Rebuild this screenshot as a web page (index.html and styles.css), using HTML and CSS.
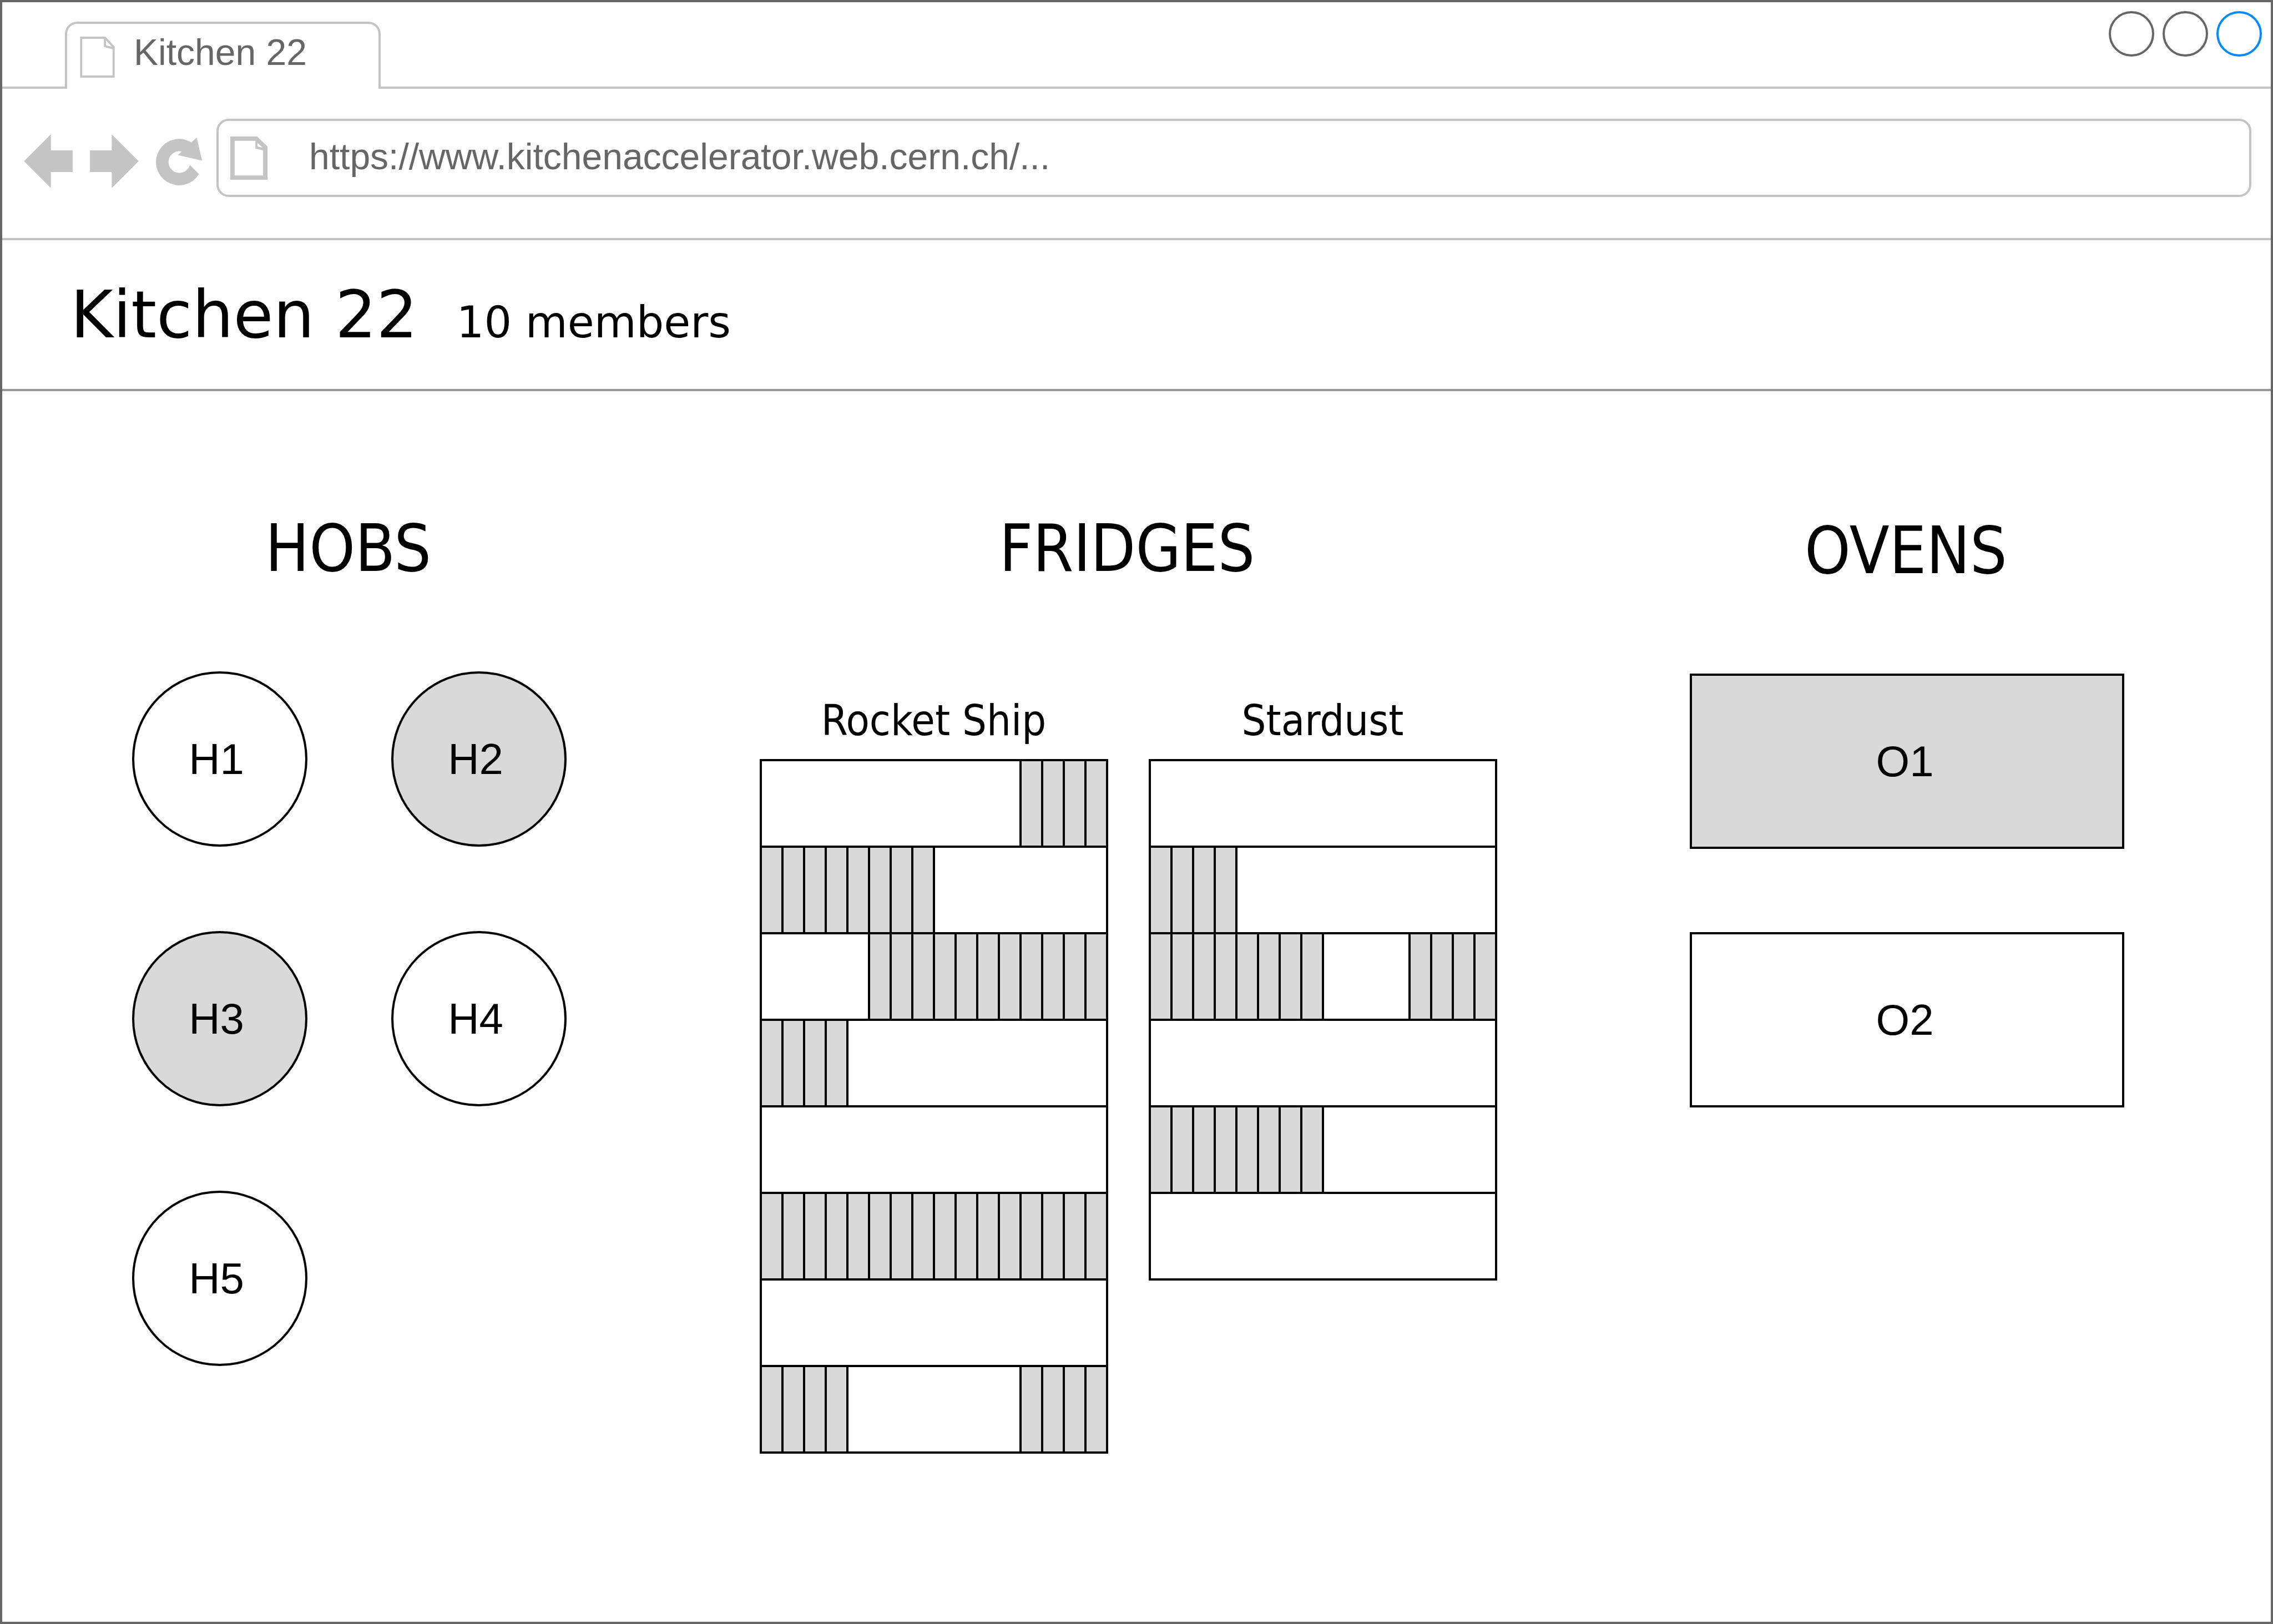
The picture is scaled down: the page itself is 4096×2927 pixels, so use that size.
FILE: index.html
```html
<!DOCTYPE html>
<html lang="en">
<head>
<meta charset="utf-8">
<meta name="viewport" content="width=device-width, initial-scale=1">
<title>Kitchen 22</title>
<link rel="stylesheet" href="styles.css">
</head>
<body>
<div class="window">
  <div class="tab-strip">
    <div class="tab">
      <svg class="tab-icon" viewBox="0 0 80 95" aria-hidden="true"><path d="M2.500 2.500H57.500L77.500 24V92.500H2.500ZM57.500 2.500V22L77.500 27"/></svg>
      <span class="tab-title">Kitchen 22</span>
    </div>
    <div class="window-controls">
      <button class="control" type="button" aria-label="Minimise"></button>
      <button class="control" type="button" aria-label="Maximise"></button>
      <button class="control control-close" type="button" aria-label="Close"></button>
    </div>
  </div>

  <div class="toolbar">
    <nav class="nav" aria-label="Browser">
      <button class="nav-button" type="button" aria-label="Back"><svg class="arrow" viewBox="0 0 112 124"><path d="M0 62L62 0V37H112V87H62V124Z"/></svg></button>
      <button class="nav-button" type="button" aria-label="Forward"><svg class="arrow" viewBox="0 0 112 124"><path d="M112 62L50 0V37H0V87H50V124Z"/></svg></button>
      <button class="nav-button" type="button" aria-label="Reload"><svg class="reload" viewBox="361 317 108 111"><path d="M461 402A54 54 0 1 1 443.200 328L455.800 317L468 370.700L411.800 357.700L421 349.300A25.200 25.200 0 1 0 439.700 380.700Z"/></svg></button>
    </nav>
    <div class="address">
      <svg class="address-icon" viewBox="0 0 86 100" aria-hidden="true"><path fill-rule="evenodd" d="M0 0H62L86 23V100H0ZM10 10V90H76V32L58 28V10ZM63 15V23L75 26Z"/></svg>
      <input class="address-input" type="text" aria-label="Address" value="https://www.kitchenaccelerator.web.cern.ch/...">
    </div>
  </div>

  <header class="page-header">
    <h1 class="page-title">Kitchen 22</h1>
    <span class="members">10 members</span>
  </header>

  <main class="kitchen">
    <section class="group">
      <h2 class="group-title">HOBS</h2>
      <div class="hobs">
        <button class="hob" type="button">H1</button>
        <button class="hob in-use" type="button">H2</button>
        <button class="hob in-use" type="button">H3</button>
        <button class="hob" type="button">H4</button>
        <button class="hob" type="button">H5</button>
      </div>
    </section>

    <section class="group">
      <h2 class="group-title">FRIDGES</h2>
      <div class="fridges">
        <div class="fridge">
          <h3 class="fridge-title">Rocket Ship</h3>
          <div class="shelf"><i class="item from-13"></i><i class="item"></i><i class="item"></i><i class="item"></i></div>
          <div class="shelf"><i class="item"></i><i class="item"></i><i class="item"></i><i class="item"></i><i class="item"></i><i class="item"></i><i class="item"></i><i class="item"></i></div>
          <div class="shelf"><i class="item from-6"></i><i class="item"></i><i class="item"></i><i class="item"></i><i class="item"></i><i class="item"></i><i class="item"></i><i class="item"></i><i class="item"></i><i class="item"></i><i class="item"></i></div>
          <div class="shelf"><i class="item"></i><i class="item"></i><i class="item"></i><i class="item"></i></div>
          <div class="shelf"></div>
          <div class="shelf"><i class="item"></i><i class="item"></i><i class="item"></i><i class="item"></i><i class="item"></i><i class="item"></i><i class="item"></i><i class="item"></i><i class="item"></i><i class="item"></i><i class="item"></i><i class="item"></i><i class="item"></i><i class="item"></i><i class="item"></i><i class="item"></i></div>
          <div class="shelf"></div>
          <div class="shelf"><i class="item"></i><i class="item"></i><i class="item"></i><i class="item"></i><i class="item from-13"></i><i class="item"></i><i class="item"></i><i class="item"></i></div>
        </div>
        <div class="fridge">
          <h3 class="fridge-title">Stardust</h3>
          <div class="shelf"></div>
          <div class="shelf"><i class="item"></i><i class="item"></i><i class="item"></i><i class="item"></i></div>
          <div class="shelf"><i class="item"></i><i class="item"></i><i class="item"></i><i class="item"></i><i class="item"></i><i class="item"></i><i class="item"></i><i class="item"></i><i class="item from-13"></i><i class="item"></i><i class="item"></i><i class="item"></i></div>
          <div class="shelf"></div>
          <div class="shelf"><i class="item"></i><i class="item"></i><i class="item"></i><i class="item"></i><i class="item"></i><i class="item"></i><i class="item"></i><i class="item"></i></div>
          <div class="shelf"></div>
        </div>
      </div>
    </section>

    <section class="group group-ovens">
      <h2 class="group-title">OVENS</h2>
      <div class="ovens">
        <button class="oven in-use" type="button">O1</button>
        <button class="oven" type="button">O2</button>
      </div>
    </section>
  </main>
</div>
</body>
</html>
```
FILE: styles.css
```css
:root {
  --frame: #666666;
  --chrome: #c4c4c4;
  --rule: #999999;
  --used: #d9d9d9;
  --line: 4px;
}

* { box-sizing: border-box; }

body {
  margin: 0;
  background: #fff;
  color: #000;
  font-family: "Liberation Sans", Arial, sans-serif;
}

button {
  margin: 0;
  padding: 0;
  border: 0;
  background: none;
  color: inherit;
  font: inherit;
}

svg { display: block; }

.window {
  min-height: 100vh;
  border: var(--line) solid var(--frame);
}

/* Tab strip */
.tab-strip {
  display: flex;
  align-items: flex-start;
  justify-content: space-between;
  padding-left: 113px;
  border-bottom: var(--line) solid var(--chrome);
}

.tab {
  display: flex;
  align-items: flex-start;
  gap: 34px;
  width: 569px;
  height: 121px;
  margin: 35px 0 -4px;
  padding: 13px 23px 0;
  border: var(--line) solid var(--chrome);
  border-bottom: 0;
  border-radius: 22px 22px 0 0;
  background: #fff;
}

.tab-icon {
  width: 63px;
  height: 74px;
  margin-top: 10px;
  fill: none;
  stroke: var(--chrome);
  stroke-width: 5;
}

.tab-title {
  color: var(--frame);
  font-size: 66px;
  line-height: 76px;
}

.window-controls {
  display: flex;
  gap: 15px;
  padding: 16px 16px 0 0;
}

.control {
  width: 82px;
  height: 82px;
  border: var(--line) solid var(--frame);
  border-radius: 50%;
}

.control-close { border-color: #008cff; }

/* Toolbar */
.toolbar {
  display: flex;
  align-items: center;
  gap: 25px;
  padding: 54px 35px 74px 39px;
  border-bottom: var(--line) solid var(--chrome);
}

.nav {
  display: flex;
  align-items: center;
  gap: 31px;
  padding-top: 12px;
  fill: var(--chrome);
}

.arrow { width: 88px; height: 97px; }
.reload { width: 84px; height: 86px; }

.address {
  display: flex;
  flex: 1;
  align-items: center;
  gap: 75px;
  height: 141px;
  padding: 0 21px;
  border: var(--line) solid var(--chrome);
  border-radius: 22px;
}

.address-icon {
  width: 67px;
  height: 78px;
  fill: var(--chrome);
}

.address-input {
  flex: 1;
  min-width: 0;
  padding: 0 0 6px;
  border: 0;
  outline: 0;
  background: none;
  color: var(--frame);
  font: inherit;
  font-size: 66px;
}

/* Page header */
.page-header {
  display: flex;
  align-items: baseline;
  gap: 70px;
  padding: 65px 123px 63px;
  border-bottom: var(--line) solid var(--rule);
  font-family: "DejaVu Sans", Verdana, sans-serif;
}

.page-title {
  margin: 0;
  font-size: 117px;
  font-weight: 400;
  line-height: 140px;
}

.members {
  font-size: 78px;
  line-height: 96px;
}

/* Appliances */
.kitchen {
  display: flex;
  align-items: flex-start;
  justify-content: space-between;
  padding: 214px 264px 214px 234px;
}

.group-ovens { padding-top: 4px; }

.group-title,
.fridge-title {
  margin: 0;
  font-family: "DejaVu Sans Condensed", Tahoma, sans-serif;
  font-weight: 400;
  text-align: center;
}

.group-title {
  padding-right: 4px;
  font-size: 117px;
  line-height: 140px;
}

.in-use { background: var(--used); }

.hobs {
  display: grid;
  grid-template-columns: repeat(2, 316px);
  gap: 152px 151px;
  margin-top: 151px;
}

.hob {
  height: 316px;
  padding-right: 12px;
  border: var(--line) solid #000;
  border-radius: 50%;
  font-size: 78px;
}

.fridges {
  display: flex;
  align-items: flex-start;
  gap: 73px;
  margin-top: 192px;
}

.fridge { width: 628px; }

.fridge-title {
  margin-bottom: 25px;
  font-size: 77px;
  line-height: 96px;
}

/* Neighbouring shelves and items share one line between them. */
.shelf {
  display: grid;
  grid-template-columns: repeat(16, calc((100% + var(--line)) / 16));
  height: 160px;
  margin-top: -4px;
  border: var(--line) solid #000;
}

.item {
  margin-left: -4px;
  border: solid #000;
  border-width: 0 var(--line);
  background: var(--used);
}

.from-6 { grid-column-start: 6; }
.from-13 { grid-column-start: 13; }

.ovens {
  display: grid;
  gap: 150px;
  margin-top: 151px;
}

.oven {
  width: 783px;
  height: 316px;
  padding-right: 8px;
  border: var(--line) solid #000;
  font-size: 78px;
}
```
